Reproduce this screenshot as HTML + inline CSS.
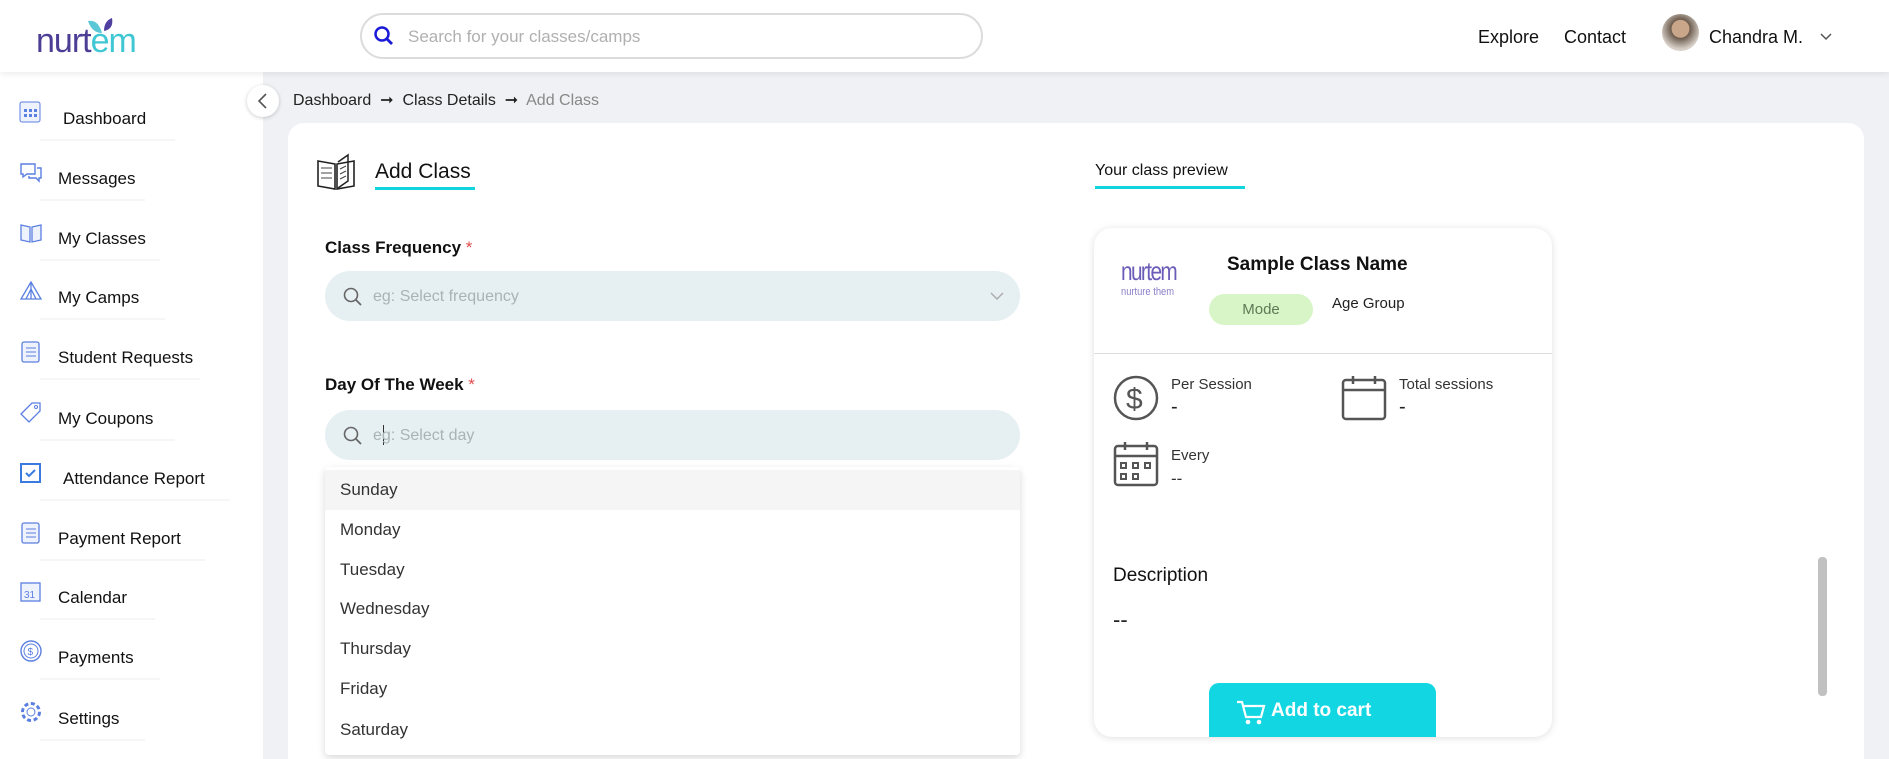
<!DOCTYPE html>
<html style="width:1889px;height:759px;overflow:hidden"><head><meta charset="utf-8"><style>
*{box-sizing:border-box;margin:0;padding:0}
body{width:1889px;height:759px;overflow:hidden;background:#f0f1f5;font-family:"Liberation Sans",sans-serif;color:#222;position:relative}
.abs{position:absolute}
.hdr{left:0;top:0;width:1889px;height:72px;background:#fff;box-shadow:0 2px 6px rgba(0,0,0,.08);z-index:2}
.side{left:0;top:72px;width:263px;height:687px;background:#fff}
.item{position:absolute;left:0;width:263px;height:30px;font-size:17px;color:#111}
.item svg{position:absolute;left:19px;top:-6px}
.item span{position:absolute;top:3px}
.item i{position:absolute;left:40px;top:33px;height:2px;background:#f6f6f8}
.card{left:288px;top:123px;width:1576px;height:636px;background:#fff;border-radius:16px 16px 0 0}
.lbl{font-size:17px;font-weight:bold;color:#111}
.lbl b{color:#e04c4c;font-weight:normal}
.inp{left:325px;width:695px;height:50px;background:#e6eff1;border-radius:25px}
.inp .ph{position:absolute;left:48px;top:17px;font-size:16px;color:#a9b3b6}
.dd{left:325px;top:467px;width:695px;height:288px;background:#fff;box-shadow:0 3px 8px rgba(0,0,0,.15);border-radius:4px}
.opt{position:absolute;left:0;width:695px;height:40px;padding-left:15px;line-height:40px;font-size:17px;color:#333}
.pc{left:1094px;top:228px;width:458px;height:509px;background:#fff;border-radius:18px;box-shadow:0 1px 8px rgba(0,0,0,.13)}
.t{position:absolute;white-space:nowrap}
</style></head><body>
<div class="abs hdr">
  <div class="t" style="left:36px;top:22px;font-size:34px;color:#4c3d95;letter-spacing:-1px">nurt<span style="color:#3fc7d4">em</span></div>
  <svg class="abs" style="left:86px;top:17px" width="30" height="20"><path d="M2 4 Q12 2 16 16 Q6 16 2 4Z" fill="#5cc8d6"/><path d="M18 14 Q18 4 26 1 Q28 12 18 14Z" fill="#4f3fa0"/></svg>
  <div class="abs" style="left:360px;top:13px;width:623px;height:46px;border:2px solid #dcdcdc;border-radius:23px"></div>
  <svg class="abs" style="left:373px;top:25px" width="22" height="22"><circle cx="9" cy="9" r="6.5" stroke="#1a1ad8" stroke-width="2.5" fill="none"/><path d="M14 14l5 5" stroke="#1a1ad8" stroke-width="2.8"/></svg>
  <div class="t" style="left:408px;top:27px;font-size:17px;color:#b0b0b0">Search for your classes/camps</div>
  <div class="t" style="left:1478px;top:27px;font-size:18px;color:#111">Explore</div>
  <div class="t" style="left:1564px;top:27px;font-size:18px;color:#111">Contact</div>
  <div class="abs" style="left:1662px;top:14px;width:37px;height:37px;border-radius:50%;background:radial-gradient(circle at 50% 40%,#c9a58a 0 30%,#6b5a4c 32%,#d8d0c8 70%)"></div>
  <div class="t" style="left:1709px;top:27px;font-size:18px;color:#111">Chandra M.</div>
  <svg class="abs" style="left:1819px;top:32px" width="14" height="10"><path d="M2 2l5 5 5-5" stroke="#555" stroke-width="1.5" fill="none"/></svg>
</div>
<div class="abs side">
  <div class="item" style="top:34px"><svg width="22" height="24"><rect x="1" y="2" width="20" height="20" rx="2" stroke="#5b7fe0" fill="#eef2fd"/><g fill="#5b7fe0"><rect x="5" y="9" width="3" height="3"/><rect x="10" y="9" width="3" height="3"/><rect x="15" y="9" width="3" height="3"/><rect x="5" y="14" width="3" height="3"/><rect x="10" y="14" width="3" height="3"/><rect x="15" y="14" width="3" height="3"/></g></svg><span style="left:63px">Dashboard</span><i style="width:135px"></i></div>
  <div class="item" style="top:94px"><svg width="24" height="24"><path d="M2 4h14v10H8l-4 3v-3H2z M18 8h4v10h-2v3l-3-3h-7v-2" stroke="#5b7fe0" fill="none" stroke-width="1.4"/></svg><span style="left:58px">Messages</span><i style="width:105px"></i></div>
  <div class="item" style="top:154px"><svg width="24" height="24"><path d="M2 5l9 2v15l-9-2z M22 5l-9 2v15l9-2z" stroke="#5b7fe0" fill="#eef2fd" stroke-width="1.3"/></svg><span style="left:58px">My Classes</span><i style="width:120px"></i></div>
  <div class="item" style="top:213px"><svg width="24" height="24"><path d="M12 3L2 20h20z M12 3v17 M12 10l-5 10 M12 10l5 10" stroke="#5b7fe0" fill="none" stroke-width="1.3"/></svg><span style="left:58px">My Camps</span><i style="width:125px"></i></div>
  <div class="item" style="top:273px"><svg width="24" height="24"><rect x="3" y="3" width="17" height="20" rx="2" stroke="#5b7fe0" fill="#eef2fd" stroke-width="1.3"/><path d="M7 9h10M7 13h10M7 17h10" stroke="#5b7fe0"/></svg><span style="left:58px">Student Requests</span><i style="width:160px"></i></div>
  <div class="item" style="top:334px"><svg width="24" height="24"><path d="M2 14L13 3h8v8L10 22z" stroke="#5b7fe0" fill="none" stroke-width="1.3"/><circle cx="17" cy="7" r="1.5" stroke="#5b7fe0" fill="none"/></svg><span style="left:58px">My Coupons</span><i style="width:135px"></i></div>
  <div class="item" style="top:394px"><svg width="24" height="24"><rect x="2" y="4" width="19" height="18" stroke="#3a7be0" fill="none" stroke-width="2"/><path d="M7 13l3 3 6-6" stroke="#3a7be0" stroke-width="2" fill="none"/></svg><span style="left:63px">Attendance Report</span><i style="width:190px"></i></div>
  <div class="item" style="top:454px"><svg width="24" height="24"><rect x="3" y="3" width="17" height="20" rx="2" stroke="#5b7fe0" fill="#eef2fd" stroke-width="1.3"/><path d="M7 9h10M7 13h10M7 17h10" stroke="#5b7fe0"/></svg><span style="left:58px">Payment Report</span><i style="width:165px"></i></div>
  <div class="item" style="top:513px"><svg width="24" height="24"><rect x="2" y="4" width="19" height="18" stroke="#5b7fe0" fill="#eef2fd" stroke-width="1.3"/><text x="5" y="19" font-size="10" fill="#5b7fe0" font-family="Liberation Sans">31</text></svg><span style="left:58px">Calendar</span><i style="width:115px"></i></div>
  <div class="item" style="top:573px"><svg width="24" height="24"><circle cx="12" cy="12" r="10" stroke="#5b7fe0" fill="none" stroke-width="1.4"/><circle cx="12" cy="12" r="7" stroke="#5b7fe0" fill="none"/><text x="8.5" y="16" font-size="10" fill="#5b7fe0" font-family="Liberation Sans">$</text></svg><span style="left:58px">Payments</span><i style="width:120px"></i></div>
  <div class="item" style="top:634px"><svg width="24" height="24"><circle cx="12" cy="12" r="4" stroke="#5b7fe0" fill="none"/><circle cx="12" cy="12" r="8.5" stroke="#5b7fe0" fill="none" stroke-dasharray="4 2.6" stroke-width="3"/></svg><span style="left:58px">Settings</span><i style="width:105px"></i></div>
</div>
<div class="abs" style="left:247px;top:85px;width:32px;height:32px;border-radius:50%;background:#fff;box-shadow:0 1px 4px rgba(0,0,0,.2);z-index:3"></div>
<svg class="abs" style="left:255px;top:92px;z-index:4" width="16" height="18"><path d="M11 2L4 9l7 7" stroke="#555" stroke-width="1.6" fill="none"/></svg>
<div class="t" style="left:293px;top:90px;font-size:16px;color:#222">Dashboard <b style="font-weight:normal">&nbsp;➞&nbsp;</b> Class Details <b style="font-weight:normal">&nbsp;➞&nbsp;</b> <span style="color:#888">Add Class</span></div>
<div class="abs card"></div>
<svg class="abs" style="left:316px;top:153px" width="40" height="38"><path d="M2 8l17 3v25L2 33z M38 8l-17 3v25l17-3z" stroke="#222" fill="none" stroke-width="1.6"/><path d="M22 9l10-7v26l-10 7" stroke="#222" fill="none" stroke-width="1.5"/><path d="M5 15h11M5 20h11M5 25h11M24 16l6-3M24 21l6-3M24 26l6-3" stroke="#444"/></svg>
<div class="t" style="left:375px;top:160px;font-size:21px;color:#111">Add Class</div>
<div class="abs" style="left:375px;top:187px;width:100px;height:3px;background:#12d4df"></div>
<div class="t lbl" style="left:325px;top:238px">Class Frequency <b>*</b></div>
<div class="abs inp" style="top:271px"><svg class="abs" style="left:17px;top:15px" width="22" height="22"><circle cx="9" cy="9" r="6.5" stroke="#666" stroke-width="1.6" fill="none"/><path d="M14 14l5 5" stroke="#666" stroke-width="1.8"/></svg><div class="ph">eg: Select frequency</div><svg class="abs" style="left:665px;top:20px" width="14" height="10"><path d="M1 2l6 6 6-6" stroke="#aaa" stroke-width="1.4" fill="none"/></svg></div>
<div class="t lbl" style="left:325px;top:375px">Day Of The Week <b>*</b></div>
<div class="abs inp" style="top:410px"><svg class="abs" style="left:17px;top:15px" width="22" height="22"><circle cx="9" cy="9" r="6.5" stroke="#666" stroke-width="1.6" fill="none"/><path d="M14 14l5 5" stroke="#666" stroke-width="1.8"/></svg><div class="abs" style="left:58px;top:15px;width:1px;height:20px;background:#333"></div><div class="ph">eg: Select day</div></div>
<div class="abs dd">
  <div class="opt" style="top:3px;background:#f5f5f5">Sunday</div>
  <div class="opt" style="top:43px">Monday</div>
  <div class="opt" style="top:83px">Tuesday</div>
  <div class="opt" style="top:122px">Wednesday</div>
  <div class="opt" style="top:162px">Thursday</div>
  <div class="opt" style="top:202px">Friday</div>
  <div class="opt" style="top:243px">Saturday</div>
</div>
<div class="t" style="left:1095px;top:162px;font-size:16px;color:#111">Your class preview</div>
<div class="abs" style="left:1095px;top:186px;width:150px;height:3px;background:#12d4df"></div>
<div class="abs pc">
  <div class="t" style="left:27px;top:28px;font-size:26px;color:#6b5cb8;letter-spacing:-2px;transform:scaleX(.8);transform-origin:left">nurtem</div>
  <div class="t" style="left:27px;top:58px;font-size:11px;color:#8a7fc8;transform:scaleX(.85);transform-origin:left">nurture them</div>
  <div class="t" style="left:133px;top:26px;font-size:19px;font-weight:bold;color:#111">Sample Class Name</div>
  <div class="abs" style="left:115px;top:66px;width:104px;height:31px;border-radius:16px;background:#d8f5c8;text-align:center;line-height:31px;font-size:15px;color:#5e7a55">Mode</div>
  <div class="t" style="left:238px;top:67px;font-size:15px;color:#222">Age Group</div>
  <div class="abs" style="left:0;top:125px;width:458px;height:1px;background:#ddd"></div>
  <svg class="abs" style="left:19px;top:147px" width="46" height="46"><circle cx="23" cy="23" r="21" stroke="#555" stroke-width="2.5" fill="none"/><text x="13" y="34" font-size="30" fill="#555" font-family="Liberation Sans">$</text></svg>
  <div class="t" style="left:77px;top:148px;font-size:15px;color:#333">Per Session</div>
  <div class="t" style="left:77px;top:168px;font-size:20px;color:#222">-</div>
  <svg class="abs" style="left:247px;top:147px" width="46" height="46"><rect x="2" y="5" width="42" height="39" rx="3" stroke="#555" stroke-width="2.5" fill="none"/><path d="M2 15h42M12 1v8M34 1v8" stroke="#555" stroke-width="2.5"/></svg>
  <div class="t" style="left:305px;top:148px;font-size:15px;color:#333">Total sessions</div>
  <div class="t" style="left:305px;top:168px;font-size:20px;color:#222">-</div>
  <svg class="abs" style="left:19px;top:213px" width="46" height="46"><rect x="2" y="5" width="42" height="39" rx="3" stroke="#555" stroke-width="2.5" fill="none"/><path d="M2 15h42M12 1v8M34 1v8" stroke="#555" stroke-width="2.5"/><g stroke="#555" stroke-width="2" fill="none"><rect x="8" y="22" width="5" height="5"/><rect x="20" y="22" width="5" height="5"/><rect x="32" y="22" width="5" height="5"/><rect x="8" y="33" width="5" height="5"/><rect x="20" y="33" width="5" height="5"/></g></svg>
  <div class="t" style="left:77px;top:219px;font-size:15px;color:#333">Every</div>
  <div class="t" style="left:77px;top:241px;font-size:17px;color:#333">--</div>
  <div class="t" style="left:19px;top:337px;font-size:19px;color:#111">Description</div>
  <div class="t" style="left:19px;top:379px;font-size:22px;color:#222">--</div>
  <div class="abs" style="left:115px;top:455px;width:227px;height:54px;background:#12d6e2;border-radius:10px 10px 0 0"></div>
  <svg class="abs" style="left:142px;top:471px" width="30" height="28"><path d="M1 3h5l4 15h15l3-11H8" stroke="#fff" stroke-width="2.2" fill="none"/><circle cx="12" cy="23" r="2.3" fill="#fff"/><circle cx="23" cy="23" r="2.3" fill="#fff"/></svg>
  <div class="t" style="left:177px;top:472px;font-size:19px;font-weight:bold;color:#fff">Add to cart</div>
</div>
<div class="abs" style="left:1818px;top:557px;width:9px;height:139px;background:#c1c1c1;border-radius:4px"></div>
</body></html>
